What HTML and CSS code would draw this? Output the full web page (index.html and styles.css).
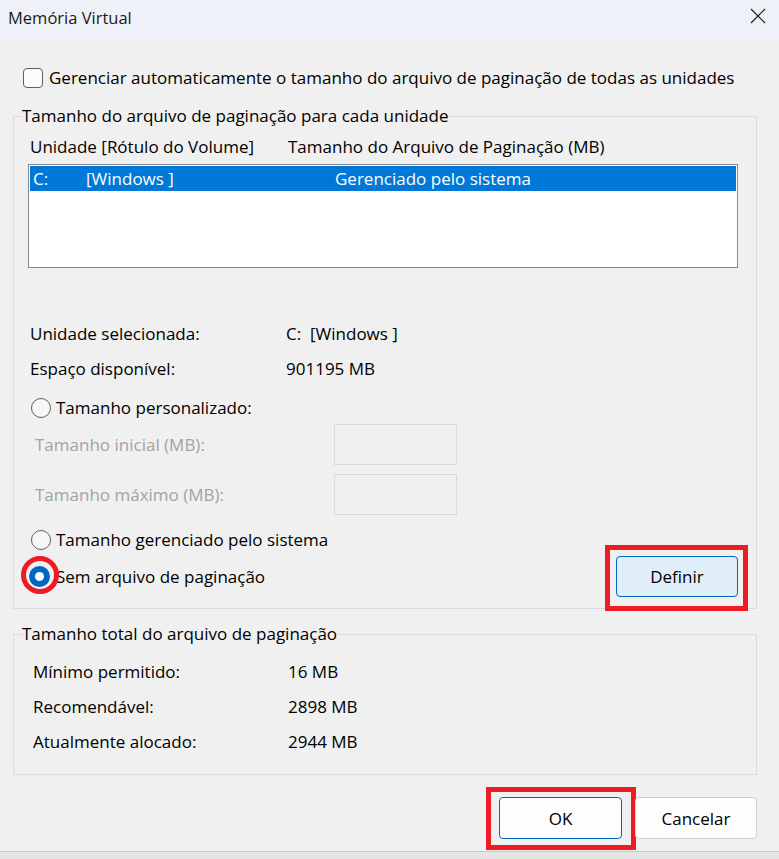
FILE: index.html
```html
<!DOCTYPE html>
<html lang="pt-BR">
<head>
    <meta charset="UTF-8">
    <title>Memória Virtual</title>
    <link rel="stylesheet" href="styles.css">
</head>
<body>
    <div class="titlebar">
        <span class="title">Memória Virtual</span>
        <svg class="close" width="16" height="16" viewBox="0 0 16 16">
            <path d="M1 1 L15 15 M15 1 L1 15" stroke="#1a1a1a" stroke-width="1.2" fill="none"/>
        </svg>
    </div>

    <div class="dialog">
        <label class="check-row">
            <span class="checkbox"></span>
            Gerenciar automaticamente o tamanho do arquivo de paginação de todas as unidades
        </label>

        <fieldset class="group group-drives">
            <legend>Tamanho do arquivo de paginação para cada unidade</legend>

            <div class="list-header">
                <span>Unidade [Rótulo do Volume]</span>
                <span>Tamanho do Arquivo de Paginação (MB)</span>
            </div>
            <div class="listbox">
                <div class="list-row selected">
                    <span>C:</span>
                    <span>[Windows ]</span>
                    <span>Gerenciado pelo sistema</span>
                </div>
            </div>

            <div class="info-row first">
                <span>Unidade selecionada:</span>
                <span>C:&nbsp; [Windows ]</span>
            </div>
            <div class="info-row">
                <span>Espaço disponível:</span>
                <span>901195 MB</span>
            </div>

            <div class="radio-row custom">
                <span class="radio"></span>
                Tamanho personalizado:
            </div>
            <div class="size-row first-size">
                <span class="disabled">Tamanho inicial (MB):</span>
                <span class="size-box"></span>
            </div>
            <div class="size-row">
                <span class="disabled">Tamanho máximo (MB):</span>
                <span class="size-box"></span>
            </div>

            <div class="radio-row managed">
                <span class="radio"></span>
                Tamanho gerenciado pelo sistema
            </div>
            <div class="set-row">
                <div class="radio-row none">
                    <span class="radio checked marked"></span>
                    Sem arquivo de paginação
                </div>
                <button class="btn btn-accent mark-set">Definir</button>
            </div>
        </fieldset>

        <fieldset class="group group-total">
            <legend>Tamanho total do arquivo de paginação</legend>
            <div class="total-row first">
                <span>Mínimo permitido:</span>
                <span>16 MB</span>
            </div>
            <div class="total-row">
                <span>Recomendável:</span>
                <span>2898 MB</span>
            </div>
            <div class="total-row">
                <span>Atualmente alocado:</span>
                <span>2944 MB</span>
            </div>
        </fieldset>

        <div class="actions">
            <button class="btn btn-default mark-ok">OK</button>
            <button class="btn">Cancelar</button>
        </div>
    </div>
    <div class="window-edge"></div>
</body>
</html>
```

FILE: styles.css
```css
*, *::before, *::after {
    box-sizing: border-box;
}
body {
    margin: 0;
    background: #f0f0f0;
    color: #000;
    font-family: 'Open Sans', 'Noto Sans', sans-serif;
    font-size: 17px;
    width: 779px;
    height: 859px;
    overflow: hidden;
}
.titlebar {
    height: 38px;
    background: #eef2f8;
    display: flex;
    align-items: center;
    justify-content: space-between;
    padding: 0 13px 0 8px;
}
.title {
    font-size: 16.5px;
    color: #1a1a1a;
    margin-top: -4px;
}
.close {
    margin-top: -6px;
}
.dialog {
    padding: 0 22px 0 13px;
}
.check-row {
    display: flex;
    align-items: center;
    height: 20px;
    margin-top: 30px;
    padding-left: 10px;
    line-height: 22px;
}
.checkbox {
    width: 20px;
    height: 20px;
    border: 1px solid #5f5f5f;
    border-radius: 4px;
    background: #fbfbfb;
    margin-right: 6px;
}
.group {
    margin: 17px 0 0;
    padding: 0;
    border: 1px solid #dcdcdc;
    min-width: 0;
}
.group legend {
    margin-left: 8px;
    padding: 0 1px 0 0;
    line-height: 22px;
}
.list-header {
    display: grid;
    grid-template-columns: 258px 1fr;
    line-height: 22px;
    margin-top: 9px;
    padding-left: 16px;
}
.listbox {
    margin: 6px 18px 0 14px;
    height: 104px;
    border: 1px solid #828790;
    background: #fff;
    padding: 1px;
}
.list-row {
    display: grid;
    grid-template-columns: 53px 249px 1fr;
    height: 25px;
    line-height: 25px;
    padding-left: 3px;
}
.list-row.selected {
    background: #0078d7;
    color: #fff;
}
.info-row {
    display: grid;
    grid-template-columns: 256px 1fr;
    line-height: 22px;
    margin-top: 13px;
    padding-left: 16px;
}
.info-row.first {
    margin-top: 55px;
}
.radio-row {
    display: flex;
    align-items: center;
    height: 22px;
    padding-left: 17px;
    line-height: 22px;
}
.radio-row.custom {
    margin-top: 17px;
}
.radio-row.managed {
    margin-top: 14px;
}
.radio {
    position: relative;
    width: 20px;
    height: 20px;
    border: 1px solid #5f5f5f;
    border-radius: 50%;
    background: #f7f7f7;
    margin-right: 5px;
}
.radio.checked {
    width: 21px;
    height: 21px;
    margin-left: -2px;
    margin-right: 6px;
    border: none;
    background: #0067c0;
}
.radio.checked::before {
    content: '';
    position: absolute;
    left: 6px;
    top: 6px;
    width: 9px;
    height: 9px;
    border-radius: 50%;
    background: #fff;
}
.radio.marked::after {
    content: '';
    position: absolute;
    left: -8px;
    top: -10px;
    width: 38px;
    height: 38px;
    border: 5px solid #ed1c24;
    border-radius: 50%;
}
.size-row {
    display: flex;
    align-items: center;
    justify-content: space-between;
    height: 41px;
    margin-top: 9px;
    padding: 0 299px 0 21px;
}
.size-row.first-size {
    margin-top: 5px;
}
.disabled {
    color: #a3a3a3;
}
.size-box {
    width: 123px;
    height: 41px;
    border: 1px solid #dadada;
    background: #f0f0f0;
}
.set-row {
    display: flex;
    align-items: center;
    justify-content: space-between;
    height: 41px;
    margin: 5px 18px 11px 0;
}
.btn {
    position: relative;
    width: 122px;
    height: 41px;
    font-family: inherit;
    font-size: 17px;
    color: #000;
    background: #fdfdfd;
    border: 1px solid #d0d0d0;
    border-radius: 4px;
    padding: 0;
}
.btn-accent {
    background: #e0eef9;
    border-color: #0067c0;
}
.btn-default {
    width: 123px;
    border-color: #0067c0;
}
.mark-set::after,
.mark-ok::after {
    content: '';
    position: absolute;
    border: 5px solid #ed1c24;
}
.mark-set::after {
    left: -12px;
    right: -11px;
    top: -12px;
    bottom: -15px;
}
.mark-ok::after {
    left: -14px;
    right: -15px;
    top: -11px;
    bottom: -12px;
}
.group-total {
    margin-top: 14px;
    padding-bottom: 21px;
}
.total-row {
    display: grid;
    grid-template-columns: 255px 1fr;
    line-height: 22px;
    margin-top: 13px;
    padding-left: 19px;
}
.total-row.first {
    margin-top: 16px;
}
.actions {
    display: flex;
    justify-content: flex-end;
    gap: 13px;
    margin-top: 22px;
    height: 42px;
}
.actions .btn {
    height: 42px;
}
.window-edge {
    margin-top: 12px;
    height: 20px;
    border-top: 1px solid #c8c8c8;
    background: #e4e4e4;
}
```
